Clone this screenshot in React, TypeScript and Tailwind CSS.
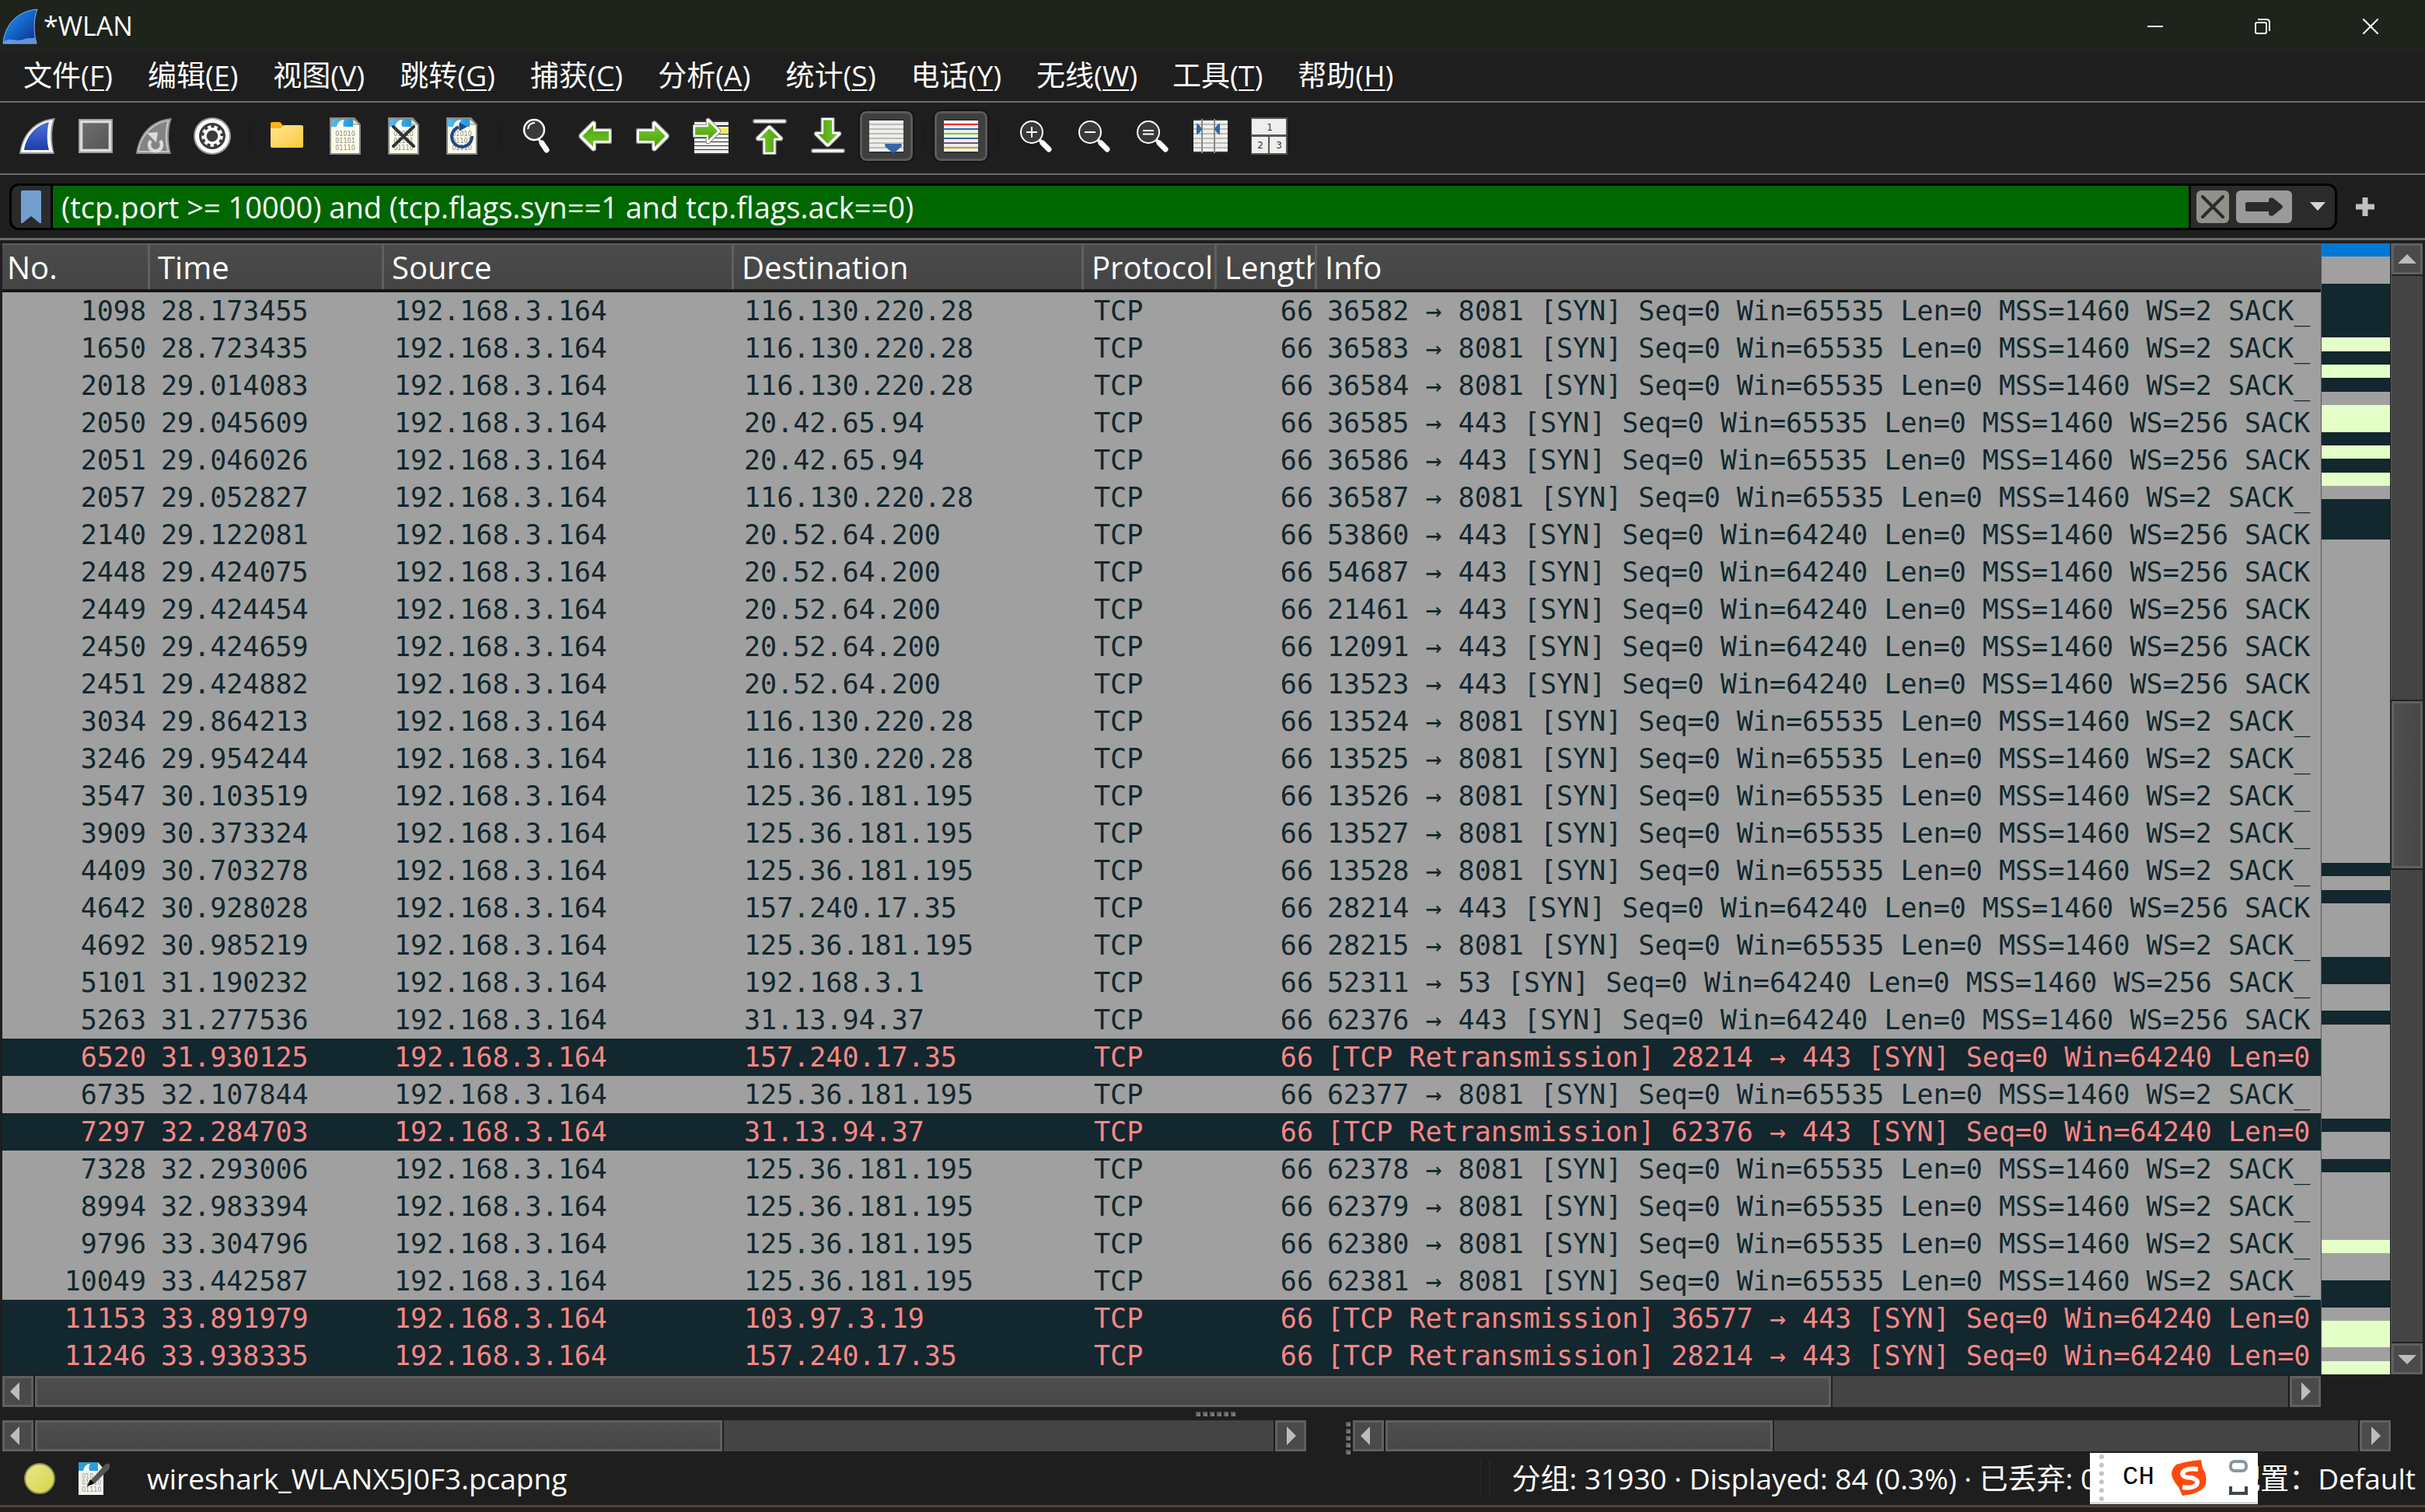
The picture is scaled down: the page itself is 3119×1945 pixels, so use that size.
import type { ReactNode } from "react";

const menus = [
  ["文件", "F"], ["编辑", "E"], ["视图", "V"], ["跳转", "G"], ["捕获", "C"], ["分析", "A"],
  ["统计", "S"], ["电话", "Y"], ["无线", "W"], ["工具", "T"], ["帮助", "H"],
];

const columns = [
  { name: "No.", width: "w-[194px]" },
  { name: "Time", width: "w-[301px]" },
  { name: "Source", width: "w-[450px]" },
  { name: "Destination", width: "w-[450px]" },
  { name: "Protocol", width: "w-[171px]" },
  { name: "Length", width: "w-[129px]" },
  { name: "Info", width: "" },
];

const syn = (from: number, to: number, win: number, ws: number) =>
  `${from} → ${to} [SYN] Seq=0 Win=${win} Len=0 MSS=1460 WS=${ws} ${to === 443 ? "SACK" : "SACK_"}`;
const retrans = (from: number) => `[TCP Retransmission] ${from} → 443 [SYN] Seq=0 Win=64240 Len=0`;

type Packet = { no: number; time: string; dst: string; info: string; bad?: boolean };

const packets: Packet[] = [
  { no: 1098, time: "28.173455", dst: "116.130.220.28", info: syn(36582, 8081, 65535, 2) },
  { no: 1650, time: "28.723435", dst: "116.130.220.28", info: syn(36583, 8081, 65535, 2) },
  { no: 2018, time: "29.014083", dst: "116.130.220.28", info: syn(36584, 8081, 65535, 2) },
  { no: 2050, time: "29.045609", dst: "20.42.65.94", info: syn(36585, 443, 65535, 256) },
  { no: 2051, time: "29.046026", dst: "20.42.65.94", info: syn(36586, 443, 65535, 256) },
  { no: 2057, time: "29.052827", dst: "116.130.220.28", info: syn(36587, 8081, 65535, 2) },
  { no: 2140, time: "29.122081", dst: "20.52.64.200", info: syn(53860, 443, 64240, 256) },
  { no: 2448, time: "29.424075", dst: "20.52.64.200", info: syn(54687, 443, 64240, 256) },
  { no: 2449, time: "29.424454", dst: "20.52.64.200", info: syn(21461, 443, 64240, 256) },
  { no: 2450, time: "29.424659", dst: "20.52.64.200", info: syn(12091, 443, 64240, 256) },
  { no: 2451, time: "29.424882", dst: "20.52.64.200", info: syn(13523, 443, 64240, 256) },
  { no: 3034, time: "29.864213", dst: "116.130.220.28", info: syn(13524, 8081, 65535, 2) },
  { no: 3246, time: "29.954244", dst: "116.130.220.28", info: syn(13525, 8081, 65535, 2) },
  { no: 3547, time: "30.103519", dst: "125.36.181.195", info: syn(13526, 8081, 65535, 2) },
  { no: 3909, time: "30.373324", dst: "125.36.181.195", info: syn(13527, 8081, 65535, 2) },
  { no: 4409, time: "30.703278", dst: "125.36.181.195", info: syn(13528, 8081, 65535, 2) },
  { no: 4642, time: "30.928028", dst: "157.240.17.35", info: syn(28214, 443, 64240, 256) },
  { no: 4692, time: "30.985219", dst: "125.36.181.195", info: syn(28215, 8081, 65535, 2) },
  { no: 5101, time: "31.190232", dst: "192.168.3.1", info: syn(52311, 53, 64240, 256) },
  { no: 5263, time: "31.277536", dst: "31.13.94.37", info: syn(62376, 443, 64240, 256) },
  { no: 6520, time: "31.930125", dst: "157.240.17.35", info: retrans(28214), bad: true },
  { no: 6735, time: "32.107844", dst: "125.36.181.195", info: syn(62377, 8081, 65535, 2) },
  { no: 7297, time: "32.284703", dst: "31.13.94.37", info: retrans(62376), bad: true },
  { no: 7328, time: "32.293006", dst: "125.36.181.195", info: syn(62378, 8081, 65535, 2) },
  { no: 8994, time: "32.983394", dst: "125.36.181.195", info: syn(62379, 8081, 65535, 2) },
  { no: 9796, time: "33.304796", dst: "125.36.181.195", info: syn(62380, 8081, 65535, 2) },
  { no: 10049, time: "33.442587", dst: "125.36.181.195", info: syn(62381, 8081, 65535, 2) },
  { no: 11153, time: "33.891979", dst: "103.97.3.19", info: retrans(36577), bad: true },
  { no: 11246, time: "33.938335", dst: "157.240.17.35", info: retrans(28214), bad: true },
];

// b = selected, g = plain SYN, d = retransmission, l = HTTP; the number is a count of packets
const mapRuns: [string, number][] = [
  ["b", 1], ["g", 2], ["d", 4], ["l", 1], ["d", 1], ["l", 1], ["d", 1], ["g", 1], ["l", 2], ["d", 1],
  ["l", 1], ["d", 1], ["l", 1], ["g", 1], ["d", 3], ["g", 24], ["d", 1], ["g", 1], ["d", 1], ["g", 4],
  ["d", 2], ["g", 2], ["d", 1], ["g", 7], ["d", 1], ["g", 2], ["d", 1], ["g", 5], ["l", 1], ["g", 2],
  ["d", 2], ["g", 1], ["l", 2], ["g", 1], ["l", 1],
];
const mapColors: Record<string, string> = {
  b: "bg-[#0078d7]",
  g: "bg-[#a0a0a0]",
  d: "bg-[#12272e]",
  l: "bg-[#e4ffc7]",
};

const Icon = ({ children }: { children: ReactNode }) => (
  <svg viewBox="0 0 48 48" className="w-12 h-12" aria-hidden="true">{children}</svg>
);

const finPath = "M46 2C41 14 41 32 45 46H2C4 22 20 4 46 2Z";

const StartIcon = () => (
  <Icon>
    <path d="M47 1C42 14 42 32 46 47H1C4 22 20 3 47 1Z" fill="#9a9a9a" />
    <path d="M44 3C40 15 40 32 44 45H3C6 23 21 6 44 3Z" fill="#fff" />
    <path d="M39 6C36 17 36 32 39 42H7C10 24 22 10 39 6Z" fill="url(#finBlue)" />
  </Icon>
);

const StopIcon = () => (
  <Icon>
    <rect x="2" y="2" width="44" height="44" fill="#a0a0a0" />
    <rect x="4" y="4" width="40" height="40" fill="#dcdcdc" />
    <rect x="7" y="7" width="34" height="34" fill="#8a8a8a" />
    <rect x="8" y="8" width="32" height="32" fill="url(#darkGrey)" />
  </Icon>
);

const RestartIcon = () => (
  <Icon>
    <path d="M47 1C42 14 42 32 46 47H1C4 22 20 3 47 1Z" fill="#8c8c8c" />
    <path d="M44 3C40 15 40 32 44 45H3C6 23 21 6 44 3Z" fill="#c4c4c4" />
    <path d="M41 5C38 17 38 32 41 43H5C8 24 22 9 41 5Z" fill="#848484" />
    <path d="M19 27A8 8 0 1 0 31 27" transform="translate(1 3)" fill="none" stroke="#dcdcdc" strokeWidth="4.500" />
    <path d="M15 20L29 19L27 32Z" fill="#dcdcdc" />
  </Icon>
);

const OptionsIcon = () => (
  <Icon>
    <circle cx="24" cy="24" r="24" fill="#9a9a9a" />
    <circle cx="24" cy="24" r="22" fill="#fff" />
    <circle cx="24" cy="24" r="17" fill="#3c3c3c" />
    <circle cx="24" cy="24" r="9" fill="none" stroke="#fff" strokeWidth="3.500" />
    <circle cx="24" cy="24" r="12" fill="none" stroke="#fff" strokeWidth="3.500" strokeDasharray="4.400 3.980" />
  </Icon>
);

const FolderIcon = () => (
  <Icon>
    <path d="M3 8Q3 6 5 6H14Q16 6 17 8L20 12V20H3Z" fill="#fbb414" />
    <path d="M3 14H16L20 10H43Q45 10 45 12V37Q45 39 43 39H5Q3 39 3 37Z" fill="url(#folderYellow)" />
  </Icon>
);

const FileBase = () => (
  <>
    <path d="M4 0H36L44 9V48H4Z" fill="#888a85" />
    <path d="M6 2H34L42 10V46H6Z" fill="#fdfde8" />
    <path d="M6 2H34V12H6Z" fill="url(#sky)" />
    <path d="M13 12C14 7 17 3 23 3C21 6 21 9 22 12Z" fill="#fff" />
    <path d="M34 2V9H42Z" fill="#eee" stroke="#888a85" />
    <g fill="#8a8a84" fontFamily="DejaVu Sans" fontSize="8" textAnchor="middle">
      <text x="24" y="24">01010</text>
      <text x="24" y="33">01101</text>
      <text x="24" y="42">01110</text>
    </g>
  </>
);

const FileIcon = () => <Icon><FileBase /></Icon>;

const CloseFileIcon = () => (
  <Icon>
    <FileBase />
    <path d="M11 12L37 37M37 12L11 37" stroke="#2e3436" strokeWidth="4" strokeLinecap="round" />
  </Icon>
);

const ReloadIcon = () => (
  <Icon>
    <FileBase />
    <path d="M20 12.500A13 13 0 1 0 37 24" fill="none" stroke="#204a87" strokeWidth="4" />
    <path d="M21 7L30 12L21 17Z" fill="#204a87" stroke="#204a87" strokeWidth="1" />
  </Icon>
);

const FindIcon = () => (
  <Icon>
    <circle cx="21" cy="16" r="13" fill="#3a3a3a" stroke="#fff" strokeWidth="2.500" />
    <path d="M13 15Q14 7 22 7" fill="none" stroke="#fff" strokeWidth="2" />
    <path d="M27 28L30 33" stroke="#fff" strokeWidth="3" />
    <path d="M31 33L37 42" stroke="#fff" strokeWidth="7" strokeLinecap="round" />
  </Icon>
);

const arrowD = "M4 16H24V7Q26 5 28 8L42 22Q44 24 42 26L28 40Q26 43 24 41V32H4Z";

const Arrow = ({ turn = 0 }: { turn?: number }) => (
  <g transform={`rotate(${turn} 24 24)`}>
    <path d={arrowD} fill="#888a85" stroke="#888a85" strokeWidth="4" strokeLinejoin="round" />
    <path d={arrowD} fill="#fff" stroke="#fff" strokeWidth="1.500" strokeLinejoin="round" />
    <path d="M6 18H26V10L40 24L26 38V30H6Z" fill="url(#arrowGreen)" />
  </g>
);

const BackIcon = () => <Icon><Arrow turn={180} /></Icon>;
const ForwardIcon = () => <Icon><Arrow /></Icon>;

const GotoIcon = () => (
  <Icon>
    <rect x="2" y="4" width="44" height="44" fill="#2e3436" />
    {[6, 12, 17, 22, 27, 32, 37, 42].map((y) => (
      <rect key={y} x="2" y={y} width="44" height="4" fill="#eeeeec" />
    ))}
    <rect x="30" y="14" width="16" height="6" fill="#fce94f" />
    <g transform="translate(-2 -3) scale(0.85)"><Arrow /></g>
  </Icon>
);

const FirstIcon = () => (
  <Icon>
    <path d="M5 5H43" stroke="#888a85" strokeWidth="6" strokeLinecap="round" />
    <path d="M5 5H43" stroke="#fff" strokeWidth="3" strokeLinecap="round" />
    <g transform="translate(2 7) scale(0.9)"><Arrow turn={-90} /></g>
  </Icon>
);

const LastIcon = () => (
  <Icon>
    <path d="M5 43H43" stroke="#888a85" strokeWidth="6" strokeLinecap="round" />
    <path d="M5 43H43" stroke="#fff" strokeWidth="3" strokeLinecap="round" />
    <g transform="translate(2 -2) scale(0.9)"><Arrow turn={90} /></g>
  </Icon>
);

const Sheet = ({ colors }: { colors: string[] }) => (
  <>
    <rect x="2" y="2" width="44" height="44" fill="#2e3436" />
    <rect x="2" y="4" width="44" height="40" fill="#eeeeec" />
    {colors.map((c, i) => (
      <rect key={i} x="2" y={8 + i * 6} width="44" height="2" fill={c} />
    ))}
  </>
);
const greys = ["#babdb6", "#babdb6", "#babdb6", "#babdb6", "#babdb6", "#babdb6"];

const AutoScrollIcon = () => (
  <Icon>
    <Sheet colors={greys} />
    <path d="M23 34H43Q45 35 43 38L35 45Q33 46 31 45L23 38Q21 35 23 34Z" fill="#3465a4" />
  </Icon>
);

const ColorizeIcon = () => (
  <Icon><Sheet colors={["#ef2929", "#3465a4", "#73d216", "#3465a4", "#75507b", "#c4a000"]} /></Icon>
);

const ZoomIcon = ({ d }: { d: string }) => (
  <Icon>
    <circle cx="19" cy="19" r="14" fill="#3a3a3a" stroke="#fff" strokeWidth="2" />
    <path d={d} stroke="#fff" strokeWidth="2" />
    <path d="M33 33L41 41" stroke="#fff" strokeWidth="7" strokeLinecap="round" />
    <path d="M29 29L33 33" stroke="#fff" strokeWidth="4" />
  </Icon>
);

const ResizeColumnsIcon = () => (
  <Icon>
    <Sheet colors={greys} />
    <path d="M13 2V46M29 2V46" stroke="#888a85" strokeWidth="2" />
    <path d="M6 8Q9 8 13 15Q9 22 6 22ZM36 8Q33 8 29 15Q33 22 36 22Z" fill="#3465a4" />
  </Icon>
);

const LayoutIcon = () => (
  <Icon>
    <rect x="1" y="0" width="47" height="48" fill="#555753" />
    <rect x="2" y="2" width="44" height="20" fill="#eeeeec" />
    <rect x="2" y="25" width="21" height="21" fill="#eeeeec" />
    <rect x="25" y="25" width="21" height="21" fill="#eeeeec" />
    <g fill="#2e3436" fontFamily="DejaVu Sans" fontSize="12" textAnchor="middle">
      <text x="25" y="17">1</text>
      <text x="13" y="40">2</text>
      <text x="37" y="40">3</text>
    </g>
  </Icon>
);

const toolGroups: { label: string; icon: ReactNode; on?: boolean }[][] = [
  [
    { label: "Start", icon: <StartIcon /> },
    { label: "Stop", icon: <StopIcon /> },
    { label: "Restart", icon: <RestartIcon /> },
    { label: "Options", icon: <OptionsIcon /> },
  ],
  [
    { label: "Open", icon: <FolderIcon /> },
    { label: "Save", icon: <FileIcon /> },
    { label: "Close file", icon: <CloseFileIcon /> },
    { label: "Reload", icon: <ReloadIcon /> },
  ],
  [
    { label: "Find", icon: <FindIcon /> },
    { label: "Back", icon: <BackIcon /> },
    { label: "Forward", icon: <ForwardIcon /> },
    { label: "Go to packet", icon: <GotoIcon /> },
    { label: "First packet", icon: <FirstIcon /> },
    { label: "Last packet", icon: <LastIcon /> },
    { label: "Auto scroll", icon: <AutoScrollIcon />, on: true },
  ],
  [{ label: "Colorize", icon: <ColorizeIcon />, on: true }],
  [
    { label: "Zoom in", icon: <ZoomIcon d="M12 19H26M19 12V26" /> },
    { label: "Zoom out", icon: <ZoomIcon d="M12 19H26" /> },
    { label: "Normal size", icon: <ZoomIcon d="M12 17H26M12 21.500H26" /> },
    { label: "Resize columns", icon: <ResizeColumnsIcon /> },
    { label: "Layout", icon: <LayoutIcon /> },
  ],
];

const scrollArrows = {
  left: "M22 8V32L10 20Z",
  right: "M15 8V32L27 20Z",
  up: "M8 26H32L20 14Z",
  down: "M8 15H32L20 27Z",
};

function ScrollButton({ dir }: { dir: keyof typeof scrollArrows }) {
  return (
    <button aria-label={`Scroll ${dir}`} className="w-10 h-10 shrink-0 bg-[#4a4a4a] border-3 border-[#606060]">
      <svg viewBox="3 3 34 34" className="w-full h-full" aria-hidden="true">
        <path d={scrollArrows[dir]} fill="#bcbcbc" />
      </svg>
    </button>
  );
}

// size is the thumb's share of the track, in percent
function HScroll({ size }: { size: number }) {
  return (
    <div className="flex flex-1 min-w-0 h-10 gap-[2px] bg-[#1a1a1a]">
      <ScrollButton dir="left" />
      <div className="flex-1 bg-[#444]">
        <div
          className="h-full bg-linear-to-b from-[#4e4e4e] to-[#474747] border-3 border-[#606060] shadow-[2px_0_0_#222]"
          style={{ width: `${size}%` }}
        />
      </div>
      <ScrollButton dir="right" />
    </div>
  );
}

function Dots({ count, vertical }: { count: number; vertical?: boolean }) {
  return (
    <div className={vertical ? "flex flex-col gap-[3px]" : "flex gap-[3px]"}>
      {[...Array(count)].map((_, i) => (
        <span key={i} className="block w-[6px] h-[6px] bg-[#7a7a7a] border-t-2 border-l-2 border-[#5c5c5c]" />
      ))}
    </div>
  );
}

function TitleBar() {
  return (
    <header className="flex items-center h-[67px] bg-[#1e231c]">
      <svg viewBox="0 0 48 48" className="w-12 h-12 ml-[2px]" aria-hidden="true">
        <path d={finPath} fill="url(#finLogo)" stroke="#8ab4e8" strokeWidth="1" />
        <path d="M3 43C12 37 20 45 30 40C36 38 40 40 43 38L45 46H2Z" fill="#7ba7e6" opacity="0.8" />
      </svg>
      <h1 className="flex-1 pl-[6px] text-[34px]">*WLAN</h1>
      <button aria-label="Minimize" className="grid place-items-center w-[138px] h-full">
        <svg viewBox="0 0 20 20" className="w-5 h-5"><path d="M0 10H20" stroke="#fff" strokeWidth="2" /></svg>
      </button>
      <button aria-label="Restore" className="grid place-items-center w-[138px] h-full">
        <svg viewBox="0 0 20 20" className="w-5 h-5" fill="none" stroke="#fff" strokeWidth="2">
          <rect x="1" y="5" width="14" height="14" rx="2" />
          <path d="M4 1H15Q19 1 19 5V16" />
        </svg>
      </button>
      <button aria-label="Close" className="grid place-items-center w-[140px] h-full">
        <svg viewBox="0 0 20 20" className="w-5 h-5"><path d="M0 0L20 20M20 0L0 20" stroke="#fff" strokeWidth="2" /></svg>
      </button>
    </header>
  );
}

function Toolbar() {
  return (
    <div role="toolbar" className="flex items-center h-[93px] pl-[10px] pb-[5px] border-t-2 border-[#6b6b6b]">
      {toolGroups.map((group, g) => (
        <div key={g} className="flex items-center">
          {g > 0 && <div className="flex justify-center w-[21px]"><span className="w-1 h-8 border-x border-[#191919]" /></div>}
          {group.map((t) => (
            <div key={t.label} className="flex justify-center w-[75px]">
              <button
                aria-label={t.label}
                className={
                  t.on
                    ? "grid place-items-center w-[68px] h-16 rounded-lg bg-[#3f3f3f] border-3 border-[#5a5a5a] outline-2 outline-[#151515]"
                    : "grid place-items-center w-[68px] h-16"
                }
              >
                {t.icon}
              </button>
            </div>
          ))}
        </div>
      ))}
    </div>
  );
}

function FilterBar() {
  return (
    <form className="flex items-center h-[83px] pl-3 border-t-2 border-[#6b6b6b]">
      <div className="flex flex-1 h-[60px] rounded-xl border-3 border-black bg-[#2b2b2b] overflow-hidden">
        <button type="button" aria-label="Bookmarks" className="grid place-items-center w-[50px]">
          <svg viewBox="0 0 26 42" className="w-[26px] h-[42px]">
            <path d="M0 2Q0 0 2 0H24Q26 0 26 2V42H24L13 33L2 42H0Z" fill="#729fcf" />
          </svg>
        </button>
        <input
          aria-label="Display filter"
          defaultValue="(tcp.port >= 10000) and (tcp.flags.syn==1 and tcp.flags.ack==0)"
          className="flex-1 min-w-0 px-[11px] pt-[2px] text-[38px] bg-[#006700] border-x-3 border-black outline-none"
        />
        <div className="flex items-center gap-[9px] pl-[7px]">
          <button type="button" aria-label="Clear" className="w-[42px] h-[42px] rounded-md bg-[#8f918b]">
            <svg viewBox="0 0 42 42"><path d="M8 8L34 34M34 8L8 34" stroke="#2b2b2b" strokeWidth="4" strokeLinecap="round" /></svg>
          </button>
          <button type="button" aria-label="Apply" className="w-[72px] h-[42px] rounded-md bg-[#9a9a9a]">
            <svg viewBox="0 0 72 42">
              <path d="M14 15H42V11Q44 8 48 10L59 19Q61 21 59 23L48 32Q44 34 42 31V27H14Q12 27 12 25V17Q12 15 14 15Z" fill="#2b2b2b" />
            </svg>
          </button>
          <button type="button" aria-label="History" className="grid place-items-center w-[46px] h-full pl-[2px]">
            <svg viewBox="0 0 20 11" className="w-5 h-[11px]"><path d="M0 0H20L10 11Z" fill="#d3d7cf" /></svg>
          </button>
        </div>
      </div>
      <button type="button" aria-label="Add" className="grid place-items-center w-[71px] mr-[42px] h-full">
        <svg viewBox="0 0 24 24" className="w-6 h-6"><path d="M12 0V24M0 12H24" stroke="#c0c0c0" strokeWidth="7" /></svg>
      </button>
    </form>
  );
}

function PacketTable() {
  return (
    <table className="w-full table-fixed border-separate border-spacing-0">
      <thead>
        <tr className="bg-linear-to-b from-[#4b4b4b] to-[#444]">
          {columns.map((c, i) => (
            <th key={c.name} scope="col" className={`${c.width} p-0 border-t-2 border-t-[#5c5c5c] border-b-4 border-b-[#161616] font-normal`}>
              <div className={i < 6 ? "flex mr-1 border-r-3 border-[#606060]" : "flex"}>
                <span className="flex-1 w-0 pl-[6px] text-left text-[40px] leading-[57px] whitespace-nowrap overflow-hidden">{c.name}</span>
              </div>
            </th>
          ))}
        </tr>
      </thead>
      <tbody className="font-['DejaVu_Sans_Mono',monospace] text-[35px] leading-[48px] whitespace-nowrap">
        {packets.map((p) => (
          <tr key={p.no} className={p.bad ? "h-12 bg-[#12272e] text-[#f78787]" : "h-12 bg-[#a0a0a0] text-[#12272e]"}>
            <td className="p-0 pr-[9px] text-right">{p.no}</td>
            <td className="p-0 pl-[10px]">{p.time}</td>
            <td className="p-0 pl-[9px]">192.168.3.164</td>
            <td className="p-0 pl-[9px]">{p.dst}</td>
            <td className="p-0 pl-[9px]">TCP</td>
            <td className="p-0 pr-[9px] text-right">66</td>
            <td className="p-0 pl-[9px] overflow-hidden">{p.info}</td>
          </tr>
        ))}
      </tbody>
    </table>
  );
}

function StatusBar() {
  return (
    <footer className="relative flex items-center h-[69px] text-[37px] whitespace-nowrap">
      <div className="flex items-center w-[61%] h-full">
        <button aria-label="Expert info" className="w-10 h-10 ml-[31px] rounded-full bg-linear-to-br from-[#e8e58e] to-[#d6d63e] border-2 border-[#8f8f50]" />
        <button aria-label="Edit comment" className="ml-7 mr-[46px]">
          <svg viewBox="0 0 44 42" className="w-11 h-[42px]">
            <path d="M2 0H27L34 8V42H2Z" fill="#f4f4ec" />
            <path d="M2 0H27V11H2Z" fill="#2a9fd8" />
            <path d="M8 11C9 6 12 2 17 2C15 5 15 8 16 11Z" fill="#fff" />
            <g fill="#9a9a94" fontFamily="DejaVu Sans" fontSize="8">
              <text x="6" y="21">010</text>
              <text x="6" y="29">01110</text>
              <text x="6" y="38">01110</text>
            </g>
            <path d="M18 23L36 3Q40 0 42 3Q43 6 41 9L23 27L13 31Z" fill="#555753" />
            <path d="M13 31L17 22L22 27Z" fill="#000" />
          </svg>
        </button>
        <span>wireshark_WLANX5J0F3.pcapng</span>
      </div>
      <span className="w-[14px] h-[50px] border-x-2 border-[#262626]" />
      <span className="pl-7">分组: 31930 · Displayed: 84 (0.3%) · 已丢弃: 0</span>
      <span className="ml-auto pr-3">配置：Default</span>

      {/* input method bar floating over the status text */}
      <div className="absolute right-[215px] top-[2px] flex items-center w-[216px] h-[66px] pl-3 bg-white border-b-3 border-[#d8d8d8] text-black">
        <span className="h-[60px] border-l-6 border-dotted border-[#c4c4c4]" />
        <span className="pl-6 pr-5 font-['Liberation_Mono',monospace] text-[34px]">CH</span>
        <svg viewBox="0 0 48 48" className="w-12 h-12">
          <path d="M8 7Q24 2 40 1L42 12Q48 20 46 32Q42 44 16 47L11 36Q4 28 2 20Q2 12 8 7Z" fill="#ff4a0a" />
          <path d="M36 13Q18 11 16 19Q17 24 28 24Q38 27 34 33Q29 38 16 36" fill="none" stroke="#fff" strokeWidth="6" />
        </svg>
        <svg viewBox="0 0 24 46" className="w-6 h-[46px] ml-7" fill="none" strokeWidth="4">
          <rect x="2" y="2" width="20" height="12" rx="5" stroke="#8a96a4" />
          <path d="M2 34V43H22V34" stroke="#3c4650" />
        </svg>
      </div>
    </footer>
  );
}

export default function App() {
  return (
    <div className="flex flex-col min-h-screen bg-[#1e1e1e] text-white font-['Open_Sans','Noto_Sans_CJK_SC',sans-serif]">
      <svg className="absolute w-0 h-0" aria-hidden="true">
        <defs>
          <linearGradient id="finBlue" x2="0" y2="1"><stop stopColor="#4f74dc" /><stop offset="1" stopColor="#1e3ca8" /></linearGradient>
          <linearGradient id="finLogo" x2="1" y2="1"><stop stopColor="#1f9bff" /><stop offset="1" stopColor="#0a2a90" /></linearGradient>
          <linearGradient id="darkGrey" x2="1" y2="1"><stop stopColor="#6e6e6e" /><stop offset="1" stopColor="#565656" /></linearGradient>
          <linearGradient id="folderYellow" x2="1" y2="1"><stop stopColor="#ffe69b" /><stop offset="1" stopColor="#ffc936" /></linearGradient>
          <linearGradient id="sky" x2="1"><stop stopColor="#5bb8ea" /><stop offset="1" stopColor="#1b9be0" /></linearGradient>
          <linearGradient id="arrowGreen" x2="0" y2="1"><stop stopColor="#73c833" /><stop offset="1" stopColor="#4ea106" /></linearGradient>
        </defs>
      </svg>

      <TitleBar />
      <nav className="flex items-center gap-[45px] h-[63px] pl-[30px] pb-1 text-[37px] whitespace-nowrap">
        {menus.map(([label, key]) => (
          <button key={key}>{label}(<span className="underline underline-offset-4 decoration-2">{key}</span>)</button>
        ))}
      </nav>
      <Toolbar />
      <FilterBar />

      <main className="flex flex-1 pl-[3px] pt-1 border-t-3 border-[#6b6b6b]">
        <div className="flex-1 min-w-0 overflow-hidden"><PacketTable /></div>
        <div className="flex flex-col w-[91px] border-x border-[#555] pr-[1px]">
          {mapRuns.map(([kind, n], i) => (
            <div key={i} className={mapColors[kind]} style={{ flexGrow: n }} />
          ))}
        </div>
        <div className="flex flex-col gap-[2px] w-[40px] mr-[3px] bg-[#222]">
          <ScrollButton dir="up" />
          <div className="flex flex-col flex-1 bg-[#444]">
            <div className="grow-[550]" />
            <div className="grow-[210] border-3 border-[#606060] bg-linear-to-r from-[#4e4e4e] to-[#474747] outline-2 outline-[#222]" />
            <div className="grow-[612]" />
          </div>
          <ScrollButton dir="down" />
        </div>
      </main>

      <div className="flex pt-[2px] pl-[3px] pr-[134px]"><HScroll size={79.7} /></div>
      <div className="flex justify-center items-center h-[17px] pl-[8px]"><Dots count={6} /></div>
      <div className="flex h-10">
        <div className="flex w-[54%] pl-[3px] pr-1"><HScroll size={55.5} /></div>
        <div className="flex flex-1 pl-[44px]">
          <div className="pt-[2px] px-[3px]"><Dots count={5} vertical /></div>
          <HScroll size={39.8} />
        </div>
        <div className="w-[44px] border-l-2 border-[#191919]" />
      </div>
      <StatusBar />
      <div className="h-[9px] bg-[#2a1f14] border-t-3 border-[#4b443a]" />
    </div>
  );
}
